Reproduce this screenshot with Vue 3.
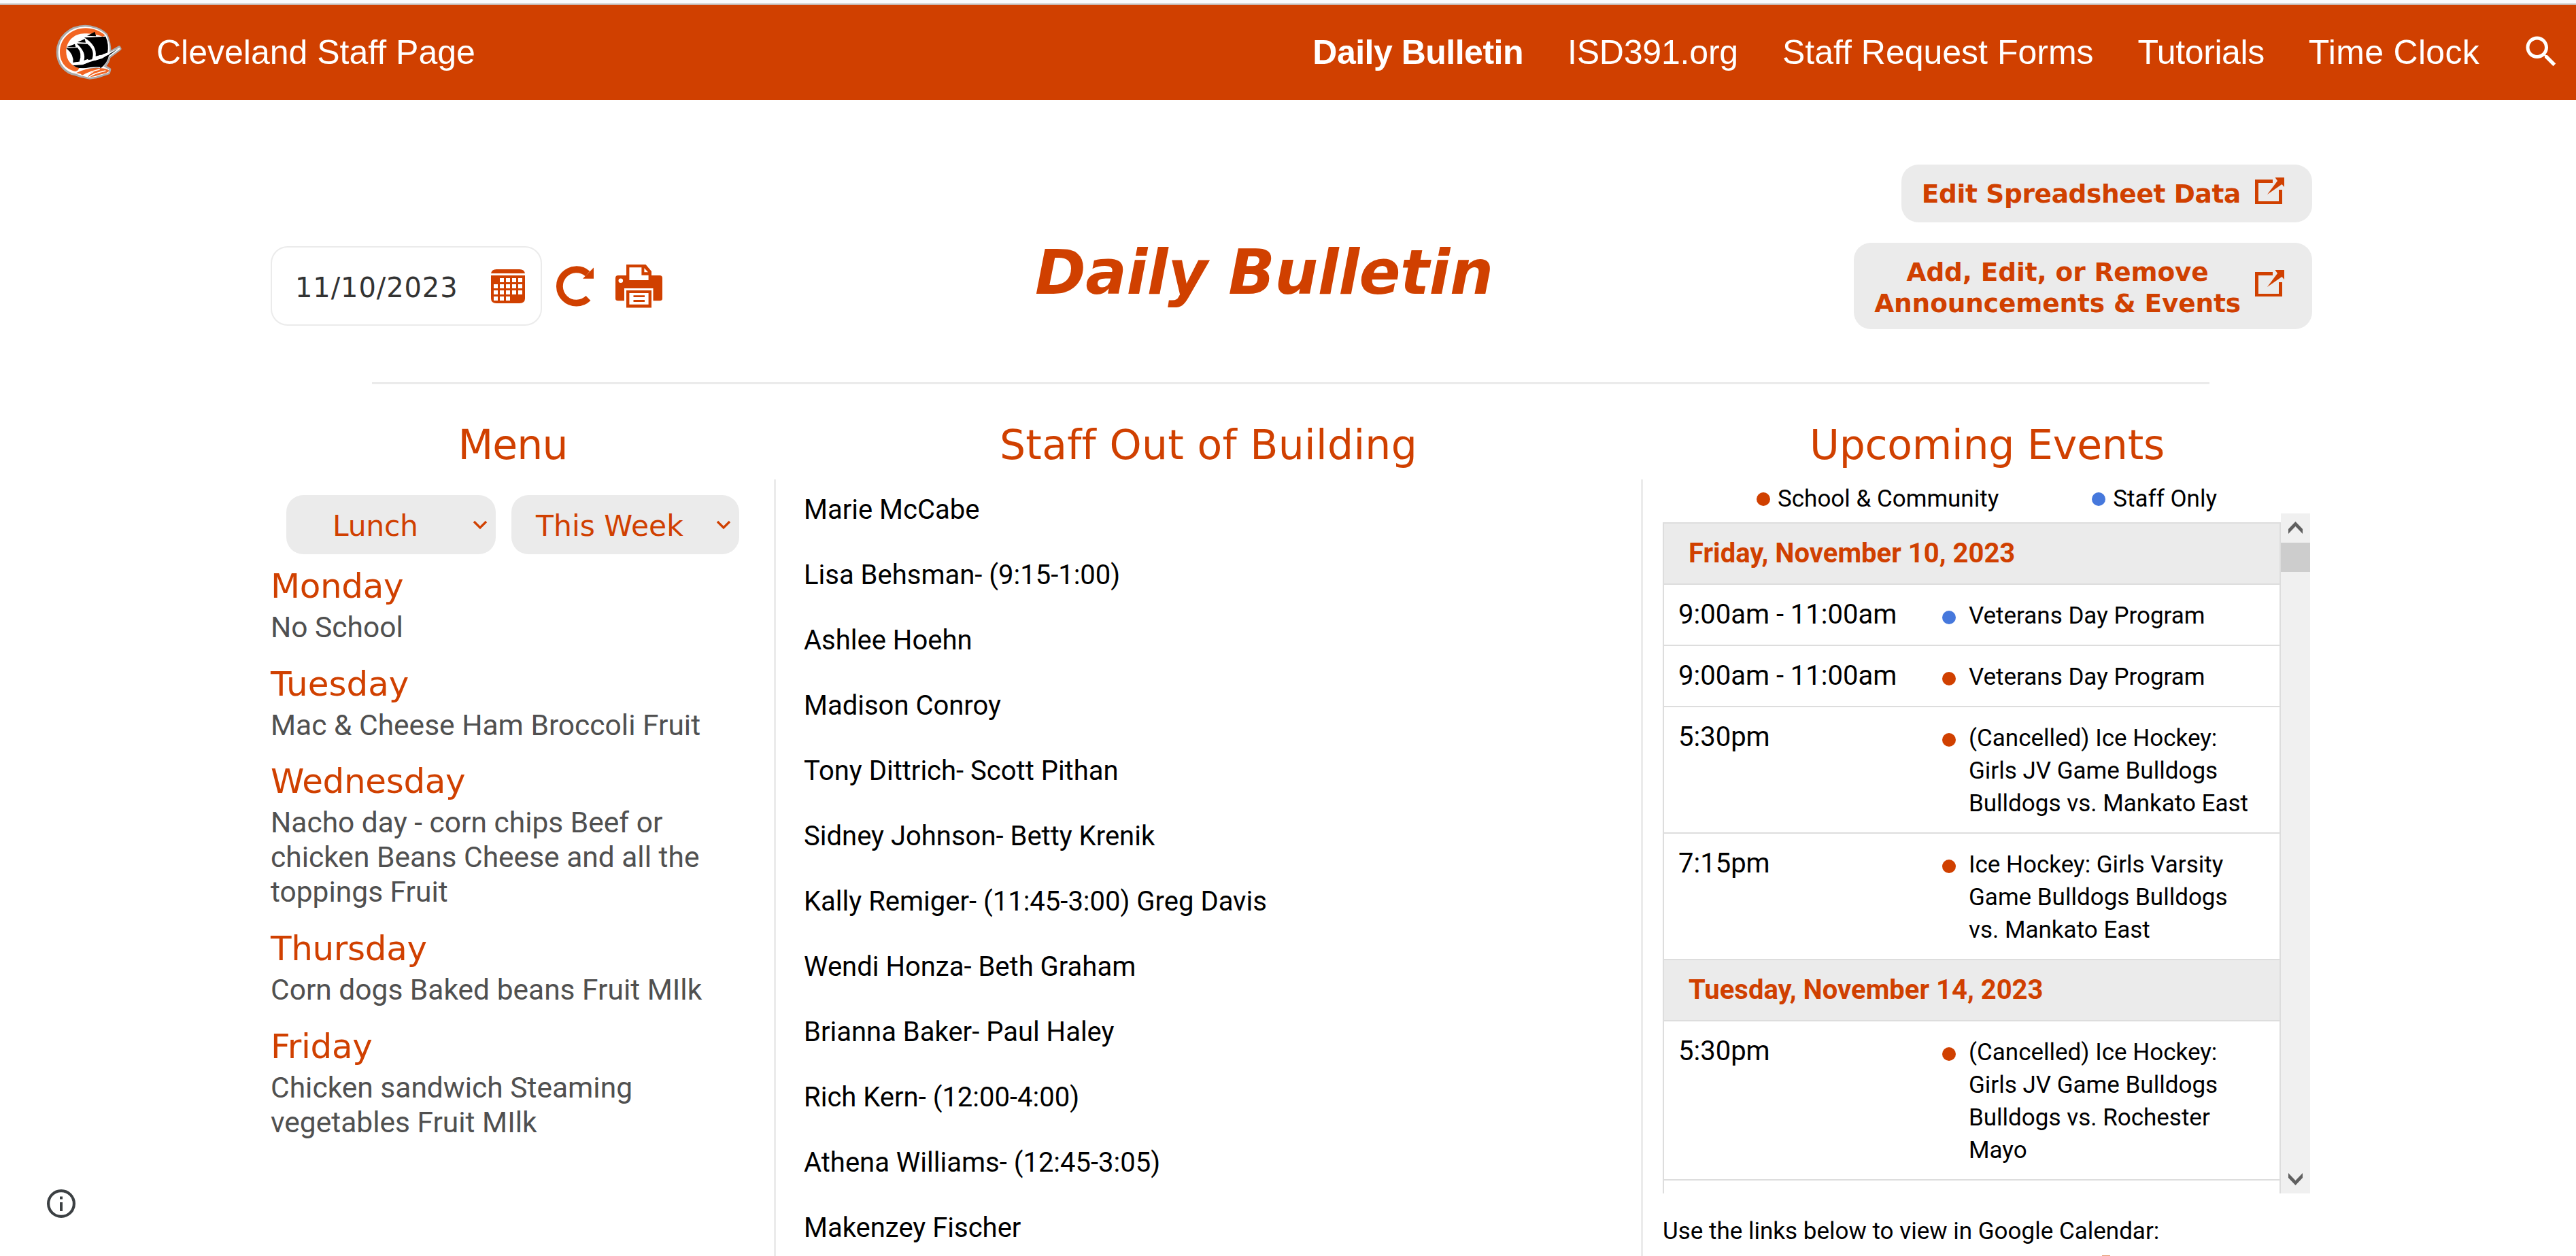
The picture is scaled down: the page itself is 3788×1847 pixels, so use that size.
<script setup>
const nav = [
  { label: 'Daily Bulletin', cls: 'active' },
  { label: 'ISD391.org', cls: 'tight' },
  { label: 'Staff Request Forms', cls: '' },
  { label: 'Tutorials', cls: 'tighter' },
  { label: 'Time Clock', cls: 'loose' },
]

const menu = [
  { day: 'Monday', food: 'No School' },
  { day: 'Tuesday', food: 'Mac & Cheese Ham Broccoli Fruit' },
  { day: 'Wednesday', food: 'Nacho day - corn chips Beef or chicken Beans Cheese and all the toppings Fruit' },
  { day: 'Thursday', food: 'Corn dogs Baked beans Fruit MIlk' },
  { day: 'Friday', food: 'Chicken sandwich Steaming vegetables Fruit MIlk' },
]

const staff = [
  'Marie McCabe',
  'Lisa Behsman- (9:15-1:00)',
  'Ashlee Hoehn',
  'Madison Conroy',
  'Tony Dittrich- Scott Pithan',
  'Sidney Johnson- Betty Krenik',
  'Kally Remiger- (11:45-3:00) Greg Davis',
  'Wendi Honza- Beth Graham',
  'Brianna Baker- Paul Haley',
  'Rich Kern- (12:00-4:00)',
  'Athena Williams- (12:45-3:05)',
  'Makenzey Fischer',
]

const days = [
  {
    date: 'Friday, November 10, 2023',
    events: [
      { time: '9:00am - 11:00am', kind: 'staff', title: 'Veterans Day Program' },
      { time: '9:00am - 11:00am', kind: 'school', title: 'Veterans Day Program' },
      { time: '5:30pm', kind: 'school', title: '(Cancelled) Ice Hockey: Girls JV Game Bulldogs Bulldogs vs. Mankato East' },
      { time: '7:15pm', kind: 'school', title: 'Ice Hockey: Girls Varsity Game Bulldogs Bulldogs vs. Mankato East' },
    ],
  },
  {
    date: 'Tuesday, November 14, 2023',
    events: [
      { time: '5:30pm', kind: 'school', title: '(Cancelled) Ice Hockey: Girls JV Game Bulldogs Bulldogs vs. Rochester Mayo' },
    ],
  },
]

// [column, row] of each open day square in the calendar icon
const squares = [
  [1, 0], [2, 0], [3, 0], [4, 0],
  [0, 1], [1, 1], [2, 1], [3, 1], [4, 1],
  [0, 2], [1, 2], [2, 2], [3, 2], [4, 2],
  [0, 3], [1, 3], [2, 3],
]
</script>

<template>
  <div class="page">
    <header class="topbar">
      <svg class="logo" viewBox="0 0 420 360">
        <path d="M288 92C262 68 225 56 196 56C130 56 74 104 74 170C74 222 110 262 152 268L178 276L214 284L246 280L300 262L304 246L282 232Q298 214 302 192L350 156L346 148L304 172Q306 130 288 92Z" fill="#aaa" stroke="#aaa" stroke-width="12" stroke-linejoin="round" />
        <path d="M286 95C262 72 225 61 196 61C133 61 80 107 80 170C80 220 114 256 154 262L180 271L214 279L244 275L296 258L298 248L272 234Q292 214 297 190L346 154L300 176Q304 130 286 95Z" fill="#fff" stroke="#fff" stroke-width="6" stroke-linejoin="round" />
        <path d="M284 96C262 76 228 64 198 64C134 64 84 110 84 170C84 216 114 250 160 256L170 240C134 232 112 204 112 168C112 122 146 88 192 88C222 88 250 92 272 102Z" fill="#f26522" />
        <path d="M204 98L238 80L244 100ZM162 126L194 112L198 128ZM114 148L150 134L154 148Z" />
        <path d="M192 106L286 101Q302 136 294 176L242 188Q248 140 192 106ZM158 132L206 134Q240 160 226 202L190 208Q202 170 158 132ZM112 152L162 150Q184 176 170 212L142 216Q148 182 112 152Z" />
        <path d="M142 228L184 226L214 214L270 198L342 154L300 186Q294 220 262 242L168 240L156 236Z" />
        <path d="M188 208L208 200L214 214L186 224ZM236 196L262 182L270 194L238 208ZM272 180L300 170L304 180L276 190ZM146 216L168 212L172 224L142 228Z" fill="#fff" />
        <path d="M156 262Q196 240 258 240Q294 242 302 252Q298 262 258 270Q226 282 208 278Q218 264 238 256Q200 262 184 274L176 266Z" fill="#f26522" />
        <path d="M150 258Q200 234 262 238M180 276Q214 256 260 246M212 280Q232 264 286 252" fill="none" stroke="#fff" stroke-width="4" />
      </svg>
      <span class="brand">Cleveland Staff Page</span>
      <nav class="links">
        <a v-for="item in nav" :key="item.label" :class="item.cls">{{ item.label }}</a>
      </nav>
      <svg class="search" viewBox="0 0 24 24">
        <path fill="#fff" d="M15.5 14h-.79l-.28-.27C15.41 12.59 16 11.11 16 9.5 16 5.91 13.09 3 9.5 3S3 5.91 3 9.5 5.91 16 9.5 16c1.61 0 3.09-.59 4.23-1.57l.27.28v.79l5 4.99L20.49 19l-4.99-5zm-6 0C7.01 14 5 11.99 5 9.5S7.01 5 9.5 5 14 7.01 14 9.5 11.99 14 9.5 14z" />
      </svg>
    </header>

    <main class="bulletin">
      <section class="head">
        <div class="tools">
          <div class="date">
            <span>11/10/2023</span>
            <svg width="50" height="50" viewBox="0 0 50 50">
              <path fill="#d04000" d="M0 6Q1 0 8 0H42Q49 0 50 6ZM0 9H50V43Q50 50 42 50H8Q0 50 0 43Z" />
              <rect v-for="([c, r], i) in squares" :key="i" :x="4 + c * 9" :y="13 + r * 9" width="6" height="6" fill="#fff" />
            </svg>
          </div>
          <svg class="refresh" width="56" height="60" viewBox="0 0 56 60">
            <path d="M46 11.500A24.700 24.700 0 1 0 47 47.500" fill="none" stroke="#d04000" stroke-width="9.800" />
            <path d="M55 2.500V18.700H39Z" fill="#d04000" />
          </svg>
          <svg class="printer" width="69" height="64" viewBox="0 0 69 64">
            <path fill="#d04000" d="M4 16H16V0H44.500L53 10V16H65Q69 16 69 20V50Q69 53.300 65 53.300H55.500V35H13V53.300H4Q0 53.300 0 50V20Q0 16 4 16Z" />
            <path fill="#fff" d="M20.400 4.300H38.400V15.700H48.600V23H20.400ZM42.400 5.300L48 11.300H42.400Z" />
            <circle cx="7.800" cy="23.700" r="3.300" fill="#fff" />
            <path fill="#d04000" fill-rule="evenodd" d="M16 38H53V63.500H16ZM20.400 42H48.600V58.700H20.400Z" />
            <path fill="#d04000" d="M26.500 45.300H43V48H26.500ZM26.500 52H43V55H26.500Z" />
          </svg>
        </div>
        <h1>Daily Bulletin</h1>
        <div class="actions">
          <a class="action">
            <span>Edit Spreadsheet Data</span>
            <svg width="43" height="39" viewBox="0 0 43 39">
              <path fill="#d04000" d="M0 3H26V8H5V35H35V18H40V39H0ZM29.500 0H43V14L39.500 10L18 25L33 5Z" />
            </svg>
          </a>
          <a class="action tall">
            <span>Add, Edit, or Remove<br />Announcements &amp; Events</span>
            <svg width="43" height="39" viewBox="0 0 43 39">
              <path fill="#d04000" d="M0 3H26V8H5V35H35V18H40V39H0ZM29.500 0H43V14L39.500 10L18 25L33 5Z" />
            </svg>
          </a>
        </div>
      </section>

      <div class="rule"></div>

      <section class="columns">
        <div class="col">
          <h2 class="h-menu">Menu</h2>
          <div class="body">
            <div class="selects">
              <div class="select lunch">
                <span>Lunch</span>
                <svg width="22" height="14" viewBox="0 0 22 14"><path d="M2 2L11 11L20 2" fill="none" stroke="#d04000" stroke-width="3.200" /></svg>
              </div>
              <div class="select week">
                <span>This Week</span>
                <svg width="22" height="14" viewBox="0 0 22 14"><path d="M2 2L11 11L20 2" fill="none" stroke="#d04000" stroke-width="3.200" /></svg>
              </div>
            </div>
            <div v-for="m in menu" :key="m.day" class="meal">
              <h3>{{ m.day }}</h3>
              <p>{{ m.food }}</p>
            </div>
          </div>
        </div>

        <div class="col">
          <h2 class="h-staff">Staff Out of Building</h2>
          <ul class="body staff">
            <li v-for="s in staff" :key="s">{{ s }}</li>
          </ul>
        </div>

        <div class="col">
          <h2 class="h-events">Upcoming Events</h2>
          <div class="body">
            <div class="legend">
              <span class="key"><i class="dot school"></i>School &amp; Community</span>
              <span class="key"><i class="dot staffonly"></i>Staff Only</span>
            </div>
            <div class="scroller">
              <div class="agenda">
                <template v-for="d in days" :key="d.date">
                  <div class="day">{{ d.date }}</div>
                  <div v-for="(e, i) in d.events" :key="i" class="event">
                    <span class="time">{{ e.time }}</span>
                    <i class="dot" :class="e.kind === 'staff' ? 'staffonly' : 'school'"></i>
                    <span class="title">{{ e.title }}</span>
                  </div>
                </template>
              </div>
              <div class="bar">
                <svg width="21" height="18" viewBox="0 0 21 18"><path fill="#606060" d="M10.500 0L21 11V18L10.500 7L0 18V11Z" /></svg>
                <div class="thumb"></div>
                <svg class="down" width="21" height="18" viewBox="0 0 21 18"><path fill="#606060" d="M10.500 18L21 7V0L10.500 11L0 0V7Z" /></svg>
              </div>
            </div>
            <p class="hint">Use the links below to view in Google Calendar:</p>
            <div class="link-icon"></div>
          </div>
        </div>
      </section>
    </main>

    <svg class="info" width="42" height="42" viewBox="0 0 42 42">
      <circle cx="21" cy="21" r="18.900" fill="none" stroke="#3c4043" stroke-width="4.200" />
      <path fill="#3c4043" d="M19 10.500h4v4h-4zM19 19h4v13h-4z" />
    </svg>
  </div>
</template>

<style>
body {
  margin: 0;
  background: #fff;
}
</style>

<style scoped>
.page {
  position: relative;
  width: 3788px;
  height: 1847px;
  overflow: hidden;
  background: #fff;
  color: #000;
  font-family: Roboto, sans-serif;
}
.topbar {
  display: flex;
  align-items: center;
  box-sizing: border-box;
  height: 147px;
  padding: 0 21.5px 0 60px;
  border-top: 5px solid #f9f9fb;
  background: #d04000;
  box-shadow: inset 0 2px 0 #c8c8c8;
  color: #fff;
  font: 50px/60px "Liberation Sans", Arial, sans-serif;
}
.logo {
  width: 140px;
  height: 120px;
  margin-top: 8px;
}
.brand {
  margin: 2px 0 0 30px;
}
.links {
  display: flex;
  gap: 65px;
  margin: 2px 60.5px 0 auto;
}
.active {
  font-weight: bold;
  letter-spacing: -0.5px;
}
.tight { letter-spacing: -0.2px; }
.tighter { letter-spacing: -0.4px; }
.loose { letter-spacing: 0.3px; }
.search {
  width: 60px;
  height: 60px;
  margin-top: 0;
}
.bulletin {
  width: 3002px;
  margin-left: 398px;
  padding-top: 95px;
}
h1, h2, h3, p, ul {
  margin: 0;
  padding: 0;
}
h1, h2, h3, .date, .action, .select {
  font-family: Verdana, "DejaVu Sans", sans-serif;
  color: #d04000;
}
.head {
  display: flex;
  align-items: flex-start;
  height: 242px;
}
.tools {
  display: flex;
  align-items: center;
  width: 1124px;
  height: 117px;
  margin-top: 120px;
}
.date {
  display: flex;
  align-items: center;
  justify-content: space-between;
  box-sizing: border-box;
  width: 399px;
  height: 117px;
  padding: 1px 23px 0 34px;
  border: 2px solid #ebebeb;
  border-radius: 25px;
  color: #333;
  font-size: 40px;
  letter-spacing: 0.9px;
}
.date span, .select span {
  padding-top: 4px;
}
.refresh {
  margin-left: 21px;
}
.printer {
  margin-left: 31px;
}
h1 {
  margin-top: 104px;
  font-size: 90px;
  line-height: 110px;
  font-style: italic;
  letter-spacing: -0.5px;
  white-space: nowrap;
}
.actions {
  display: flex;
  flex-direction: column;
  align-items: flex-end;
  gap: 30px;
  margin-left: auto;
}
.action {
  display: flex;
  align-items: center;
  gap: 21px;
  box-sizing: border-box;
  height: 85px;
  padding: 0 41px 0 30px;
  border-radius: 25px;
  background: #ebebeb;
  font-size: 37.5px;
  line-height: 46px;
  font-weight: bold;
  letter-spacing: -0.36px;
  text-align: center;
}
.action svg {
  margin-top: -8px;
}
.tall {
  height: 127px;
  letter-spacing: -0.14px;
}
.tall span {
  padding-top: 4px;
}
.rule {
  width: 2702px;
  height: 3px;
  margin: 78px 0 53px 149px;
  background: #ebebeb;
}
.columns {
  display: grid;
  grid-template-columns: 712px 1278px 956px;
  gap: 28px;
}
.col {
  display: flex;
  flex-direction: column;
}
h2 {
  margin-bottom: 14px;
  font-size: 60px;
  line-height: 73px;
  font-weight: normal;
  text-align: center;
}
.h-menu { letter-spacing: -0.9px; }
.h-staff { letter-spacing: 0.3px; }
.h-events { letter-spacing: -0.2px; }
.selects {
  display: flex;
  justify-content: center;
  gap: 23px;
  margin: 23px 0 17px;
}
.select {
  display: flex;
  align-items: center;
  justify-content: space-between;
  box-sizing: border-box;
  height: 87px;
  padding-right: 12px;
  border-radius: 25px;
  background: #ebebeb;
  font-size: 42.5px;
}
.lunch {
  width: 308px;
  padding-left: 68px;
  letter-spacing: -0.3px;
}
.week {
  width: 335px;
  padding-left: 36px;
}
.meal {
  margin-bottom: 27.7px;
}
h3 {
  padding-bottom: 4px;
  font-size: 50px;
  line-height: 61px;
  font-weight: normal;
  letter-spacing: -0.35px;
}
.meal:nth-child(3) h3 {
  letter-spacing: 0;
}
.meal p {
  color: #505050;
  font-size: 42.5px;
  line-height: 51px;
}
.staff {
  box-sizing: border-box;
  height: 1150px;
  padding: 20.5px 0 0 41px;
  border: solid #ebebeb;
  border-width: 0 3px;
  list-style: none;
  font-size: 40px;
  line-height: 48px;
}
.staff li {
  margin-bottom: 48.070px;
}
.legend {
  display: flex;
  gap: 137px;
  box-sizing: border-box;
  height: 50px;
  padding: 5px 0 0 139px;
  font-size: 35px;
  line-height: 48px;
}
.key {
  display: flex;
}
.dot {
  flex: none;
  width: 20px;
  height: 20px;
  border-radius: 50%;
}
.key .dot {
  margin: 14px 11px 0 0;
}
.school { background: #d04000; }
.staffonly { background: #4678dc; }
.scroller {
  display: flex;
  height: 1000px;
  overflow: hidden;
}
.agenda {
  box-sizing: border-box;
  width: 909px;
  height: 1000px;
  margin: 13px 0 0 1px;
  border: 2px solid #ddd;
}
.day, .event {
  border-bottom: 2px solid #ddd;
}
.day {
  padding: 20px 36px;
  background: #ebebeb;
  color: #d04000;
  font-size: 40px;
  line-height: 48px;
  font-weight: bold;
}
.event {
  display: flex;
  padding: 20px 28px 20px 21px;
  line-height: 48px;
}
.time {
  width: 388px;
  font-size: 40px;
}
.event .dot {
  margin: 18px 19px 0 0;
}
.title {
  flex: 1;
  margin: 1.500px 0 -1.500px;
  font-size: 35px;
}
.bar {
  display: flex;
  flex-direction: column;
  align-items: center;
  box-sizing: border-box;
  width: 43px;
  padding: 12px 0;
  background: #f0f0f0;
}
.thumb {
  width: 43px;
  height: 43px;
  margin-top: 13px;
  background: #cdcdcd;
}
.down {
  margin-top: auto;
}
.hint {
  margin: 32px 0 0 1px;
  font-size: 35px;
  line-height: 48px;
}
.link-icon {
  width: 12px;
  height: 8px;
  margin: 11px 0 0 647px;
  background: #e8976b;
}
.info {
  position: absolute;
  left: 69px;
  top: 1749px;
}
</style>
